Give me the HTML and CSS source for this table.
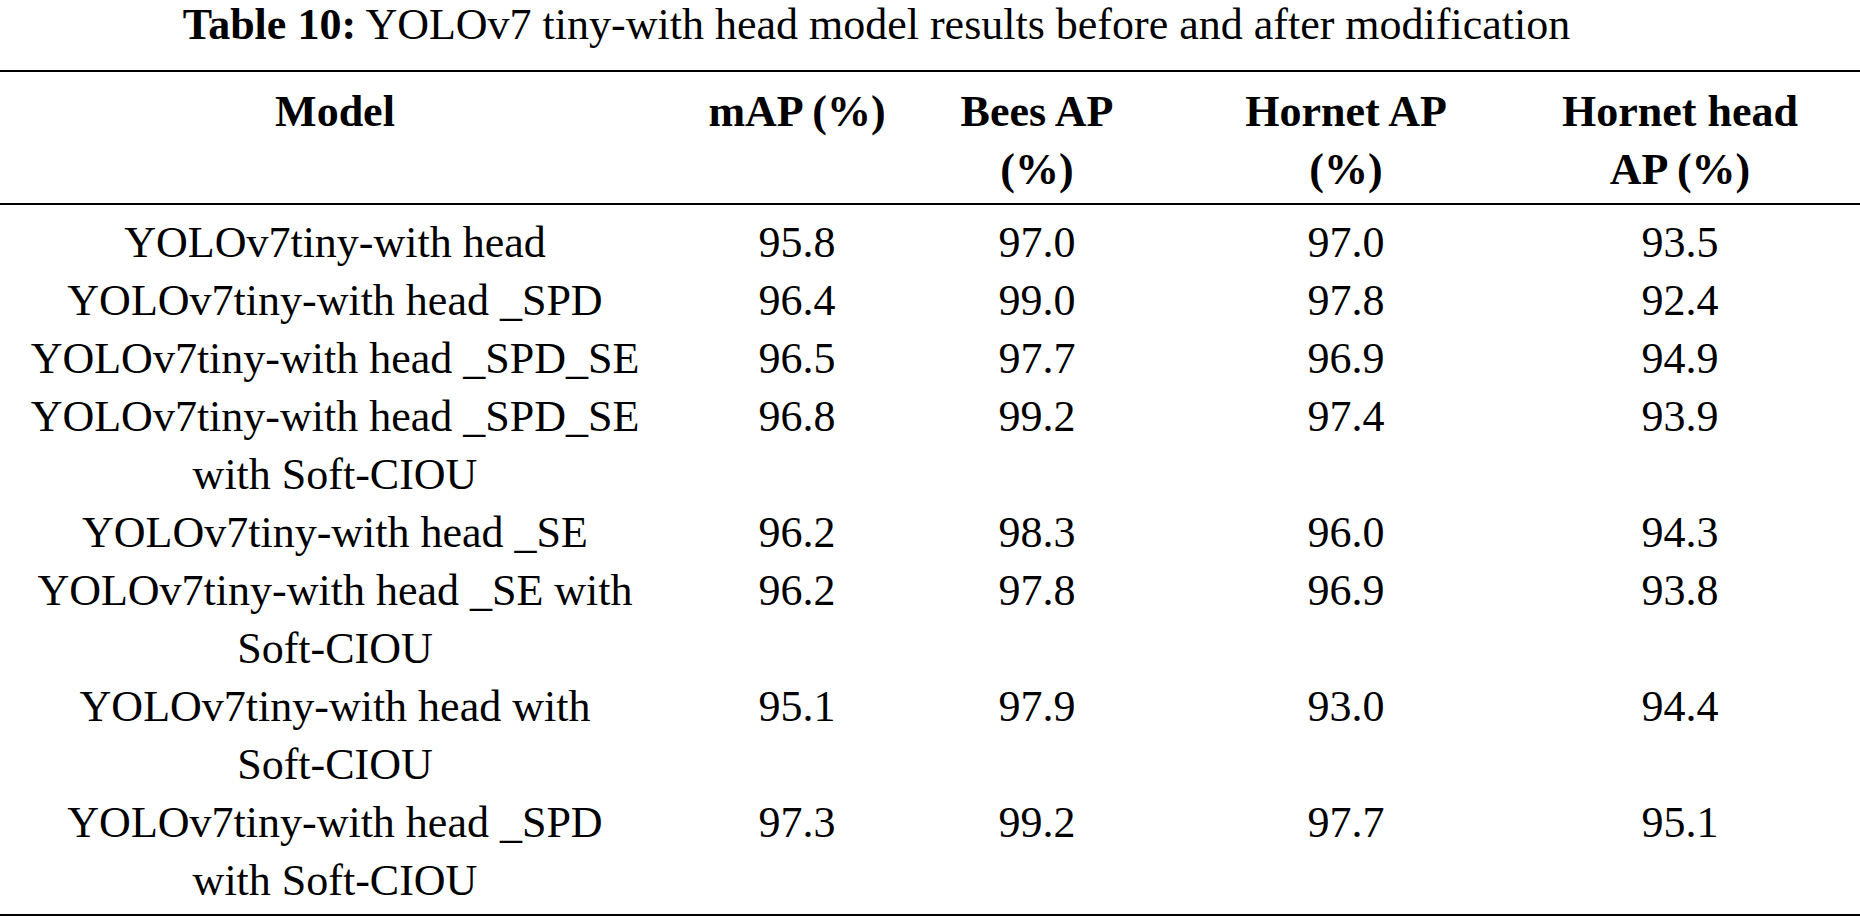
FILE: index.html
```html
<!DOCTYPE html>
<html lang="en">
<head>
<meta charset="utf-8">
<title>Table 10</title>
<link rel="stylesheet" href="styles.css">
</head>
<body>
<div class="page">
  <div class="caption"><b>Table 10:</b> YOLOv7 tiny-with head model results before and after modification</div>
  <table class="results">
    <colgroup>
      <col class="c-model">
      <col class="c-map">
      <col class="c-bees">
      <col class="c-hornet">
      <col class="c-head">
    </colgroup>
    <thead>
      <tr>
        <th>Model</th>
        <th>mAP (%)</th>
        <th>Bees AP (%)</th>
        <th>Hornet AP (%)</th>
        <th>Hornet head AP (%)</th>
      </tr>
    </thead>
    <tbody>
      <tr><td>YOLOv7tiny-with head</td><td>95.8</td><td>97.0</td><td>97.0</td><td>93.5</td></tr>
      <tr><td>YOLOv7tiny-with head _SPD</td><td>96.4</td><td>99.0</td><td>97.8</td><td>92.4</td></tr>
      <tr><td>YOLOv7tiny-with head _SPD_SE</td><td>96.5</td><td>97.7</td><td>96.9</td><td>94.9</td></tr>
      <tr><td>YOLOv7tiny-with head _SPD_SE with Soft-CIOU</td><td>96.8</td><td>99.2</td><td>97.4</td><td>93.9</td></tr>
      <tr><td>YOLOv7tiny-with head _SE</td><td>96.2</td><td>98.3</td><td>96.0</td><td>94.3</td></tr>
      <tr><td>YOLOv7tiny-with head _SE with <span class="nw">Soft-CIOU</span></td><td>96.2</td><td>97.8</td><td>96.9</td><td>93.8</td></tr>
      <tr><td>YOLOv7tiny-with head with <span class="nw">Soft-CIOU</span></td><td>95.1</td><td>97.9</td><td>93.0</td><td>94.4</td></tr>
      <tr><td>YOLOv7tiny-with head _SPD with Soft-CIOU</td><td>97.3</td><td>99.2</td><td>97.7</td><td>95.1</td></tr>
    </tbody>
  </table>
</div>
</body>
</html>
```

FILE: styles.css
```css
html, body {
  margin: 0;
  padding: 0;
  background: #ffffff;
}

.page {
  width: 1860px;
  font-family: "Liberation Serif", "Times New Roman", serif;
  font-size: 44px;
  color: #000000;
}

.caption {
  text-align: center;
  line-height: 49px;
  padding-right: 107px;
  margin-bottom: 21px;
}

.caption b {
  font-weight: bold;
}

.nw {
  white-space: nowrap;
}

.results {
  width: 1860px;
  border-collapse: collapse;
  table-layout: fixed;
  border-top: 2px solid #000;
  border-bottom: 2px solid #000;
}

.c-model { width: 670px; }
.c-map { width: 254px; }
.c-bees { width: 226px; }
.c-hornet { width: 392px; }
.c-head { width: 318px; }

.results th,
.results td {
  text-align: center;
  vertical-align: top;
  line-height: 58px;
  padding-top: 0;
  padding-bottom: 0;
}

.results th {
  font-weight: bold;
  padding-top: 11px;
  padding-bottom: 4px;
}

.results thead tr {
  border-bottom: 2px solid #000;
}

.results td {
  font-weight: normal;
}

.results tbody tr:first-child td {
  padding-top: 9px;
}

.results tbody tr:last-child td {
  padding-bottom: 4px;
}

.results th:nth-child(1),
.results td:nth-child(1) {
  padding-left: 27px;
  padding-right: 27px;
}

.results th:nth-child(2),
.results td:nth-child(2) {
  padding-left: 20px;
  padding-right: 20px;
}

.results th:nth-child(3),
.results td:nth-child(3) {
  padding-left: 13px;
  padding-right: 13px;
}

.results th:nth-child(4),
.results td:nth-child(4) {
  padding-left: 60px;
  padding-right: 60px;
}

.results th:nth-child(5),
.results td:nth-child(5) {
  padding-left: 0;
  padding-right: 42px;
}
```
